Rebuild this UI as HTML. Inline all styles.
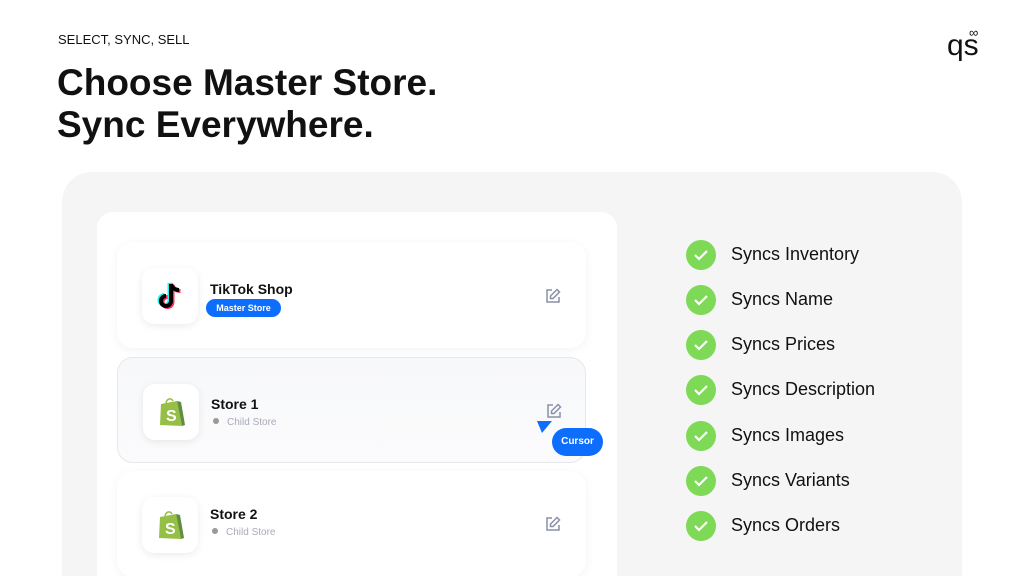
<!DOCTYPE html>
<html><head><style>
*{margin:0;padding:0;box-sizing:border-box}
html,body{width:1024px;height:576px;overflow:hidden}
body{background:#fff;font-family:"Liberation Sans",sans-serif;position:relative;color:#111}
.a{position:absolute}
.card{position:absolute;left:117px;width:469px;height:106px;background:#fff;border-radius:16px;box-shadow:0 2px 10px rgba(0,0,0,0.05)}
.ic{position:absolute;left:25px;top:26px;width:56px;height:56px;border-radius:12px;background:#fff;box-shadow:0 2px 8px rgba(0,0,0,0.08);display:flex;align-items:center;justify-content:center}
.t{position:absolute;left:93px;font-size:14px;font-weight:bold;color:#111}
.sub{position:absolute;left:95px;font-size:10px;color:#aab}
.sub:before{content:"";display:inline-block;width:6px;height:6px;border-radius:50%;background:#999;margin-right:8px;vertical-align:1px}
.ed{position:absolute;left:428px;top:46px}
.chk{position:absolute;left:686px;width:30px;height:30px;border-radius:50%;background:#7ed957}
.chk svg{position:absolute;left:7px;top:8px}
.lb{position:absolute;left:731px;font-size:18px;color:#111}
</style></head><body>
<div class="a" style="left:58px;top:32px;font-size:13px">SELECT, SYNC, SELL</div>
<div class="a" style="left:57px;top:62px;font-size:37px;font-weight:bold;line-height:42px">Choose Master Store.<br>Sync Everywhere.</div>
<div class="a" style="left:947px;top:26px;font-size:30px;line-height:40px">qs</div>
<div class="a" style="left:969px;top:26px;font-size:13px;line-height:13px">∞</div>
<div class="a" style="left:62px;top:172px;width:900px;height:430px;background:#f5f5f5;border-radius:30px"></div>
<div class="a" style="left:97px;top:212px;width:520px;height:390px;background:#fff;border-radius:16px"></div>

<div class="card" style="top:242px">
 <div class="ic"><svg width="28" height="30" viewBox="0 0 28 30"><path d="M15 3v17a5 5 0 1 1-5-5M15 3c1 4 4 6 8 6" fill="none" stroke="#25f4ee" stroke-width="4" transform="translate(-1.5,-1)"/><path d="M15 3v17a5 5 0 1 1-5-5M15 3c1 4 4 6 8 6" fill="none" stroke="#fe2c55" stroke-width="4" transform="translate(1.5,1)"/><path d="M15 3v17a5 5 0 1 1-5-5M15 3c1 4 4 6 8 6" fill="none" stroke="#000" stroke-width="4"/></svg></div>
 <div class="t" style="top:39px">TikTok Shop</div>
 <div class="a" style="left:89px;top:57px;width:75px;height:18px;border-radius:9px;background:#0d6efd;color:#fff;font-size:9px;font-weight:bold;text-align:center;line-height:18px">Master Store</div>
 <svg class="ed" width="16" height="16" viewBox="0 0 16 16" fill="none" stroke="#8a8fa8" stroke-width="1.5"><path d="M7 2H2v12h12V9"/><path d="M12 1.5l2.5 2.5L8 10.5H5.5V8z"/></svg>
</div>

<div class="card" style="top:357px;background:linear-gradient(180deg,#f7f8fa,#fbfbfc);border:1px solid #e6e8ec;box-shadow:none">
 <div class="ic"><svg width="30" height="34" viewBox="0 0 30 34"><path d="M5 9l16-3 5 25-22-1z" fill="#95bf47"/><path d="M21 6l5 25 3-1-4-23z" fill="#5e8e3e"/><path d="M10 9c0-5 5-7 7-3" fill="none" stroke="#95bf47" stroke-width="1.5"/><text x="10" y="26" font-family="Liberation Sans" font-weight="bold" font-size="16" fill="#fff">S</text></svg></div>
 <div class="t" style="top:38px">Store 1</div>
 <div class="sub" style="top:59px">Child Store</div>
 <svg class="ed" style="top:45px" width="16" height="16" viewBox="0 0 16 16" fill="none" stroke="#8a8fa8" stroke-width="1.5"><path d="M7 2H2v12h12V9"/><path d="M12 1.5l2.5 2.5L8 10.5H5.5V8z"/></svg>
</div>
<svg class="a" style="left:537px;top:420px" width="16" height="14"><path d="M0 1l15 0-10 12z" fill="#0d6efd"/></svg>
<div class="a" style="left:552px;top:428px;width:51px;height:28px;border-radius:14px;background:#0d6efd;color:#fff;font-size:10px;font-weight:bold;text-align:center;line-height:28px">Cursor</div>

<div class="card" style="top:471px">
 <div class="ic"><svg width="30" height="34" viewBox="0 0 30 34"><path d="M5 9l16-3 5 25-22-1z" fill="#95bf47"/><path d="M21 6l5 25 3-1-4-23z" fill="#5e8e3e"/><path d="M10 9c0-5 5-7 7-3" fill="none" stroke="#95bf47" stroke-width="1.5"/><text x="10" y="26" font-family="Liberation Sans" font-weight="bold" font-size="16" fill="#fff">S</text></svg></div>
 <div class="t" style="top:35px">Store 2</div>
 <div class="sub" style="top:56px">Child Store</div>
 <svg class="ed" style="top:45px" width="16" height="16" viewBox="0 0 16 16" fill="none" stroke="#8a8fa8" stroke-width="1.5"><path d="M7 2H2v12h12V9"/><path d="M12 1.5l2.5 2.5L8 10.5H5.5V8z"/></svg>
</div>

<div class="chk" style="top:240px"><svg width="16" height="14"><path d="M2 7l4 4 8-8" fill="none" stroke="#fff" stroke-width="2.2"/></svg></div><div class="lb" style="top:244px">Syncs Inventory</div>
<div class="chk" style="top:285px"><svg width="16" height="14"><path d="M2 7l4 4 8-8" fill="none" stroke="#fff" stroke-width="2.2"/></svg></div><div class="lb" style="top:289px">Syncs Name</div>
<div class="chk" style="top:330px"><svg width="16" height="14"><path d="M2 7l4 4 8-8" fill="none" stroke="#fff" stroke-width="2.2"/></svg></div><div class="lb" style="top:334px">Syncs Prices</div>
<div class="chk" style="top:375px"><svg width="16" height="14"><path d="M2 7l4 4 8-8" fill="none" stroke="#fff" stroke-width="2.2"/></svg></div><div class="lb" style="top:379px">Syncs Description</div>
<div class="chk" style="top:421px"><svg width="16" height="14"><path d="M2 7l4 4 8-8" fill="none" stroke="#fff" stroke-width="2.2"/></svg></div><div class="lb" style="top:425px">Syncs Images</div>
<div class="chk" style="top:466px"><svg width="16" height="14"><path d="M2 7l4 4 8-8" fill="none" stroke="#fff" stroke-width="2.2"/></svg></div><div class="lb" style="top:470px">Syncs Variants</div>
<div class="chk" style="top:511px"><svg width="16" height="14"><path d="M2 7l4 4 8-8" fill="none" stroke="#fff" stroke-width="2.2"/></svg></div><div class="lb" style="top:515px">Syncs Orders</div>
</body></html>
